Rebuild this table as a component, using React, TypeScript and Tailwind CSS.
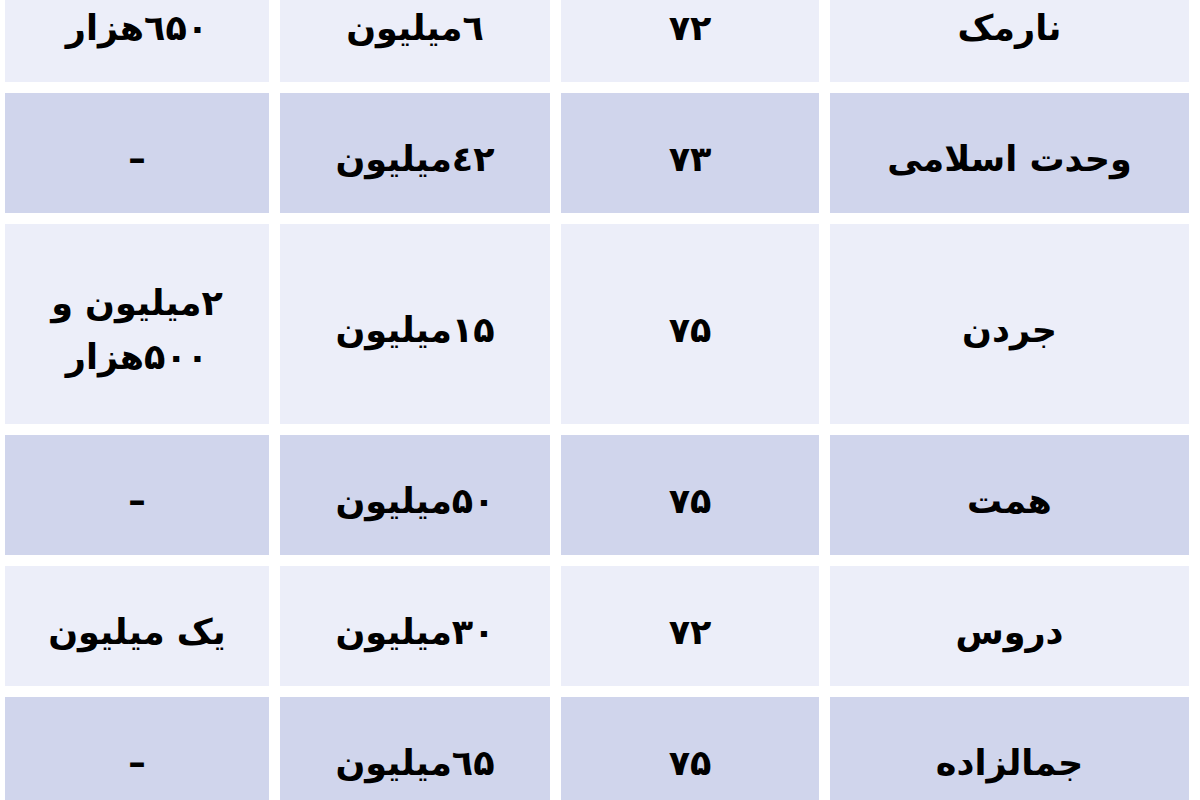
const rows: { name: string; age: string; price: string; extra: string[]; tall?: boolean; dark: boolean }[] = [
  { name: "نارمک", age: "۷۲", price: "٦میلیون", extra: ["٦۵۰هزار"], dark: false },
  { name: "وحدت اسلامی", age: "۷۳", price: "٤۲میلیون", extra: ["–"], dark: true },
  { name: "جردن", age: "۷۵", price: "۱۵میلیون", extra: ["۲میلیون و", "۵۰۰هزار"], tall: true, dark: false },
  { name: "همت", age: "۷۵", price: "۵۰میلیون", extra: ["–"], dark: true },
  { name: "دروس", age: "۷۲", price: "۳۰میلیون", extra: ["یک میلیون"], dark: false },
  { name: "جمالزاده", age: "۷۵", price: "٦۵میلیون", extra: ["–"], dark: true },
];

function Cell({ dark, tall, children }: { dark: boolean; tall?: boolean; children: React.ReactNode }) {
  return (
    <div
      className={
        "flex flex-col items-center justify-center pt-[12px] leading-[1.55] " +
        (tall ? "h-[200px] " : "h-[120px] ") +
        (dark ? "bg-[#d0d5ec]" : "bg-[#eceef9]")
      }
    >
      {children}
    </div>
  );
}

export default function App() {
  return (
    <div className="h-[800px] w-[1200px] overflow-hidden bg-white">
      <div
        dir="rtl"
        className="mt-[-38px] grid grid-cols-[359px_258px_270px_264px] gap-x-[11px] gap-y-[11px] pr-[11px] text-[35px] font-bold text-black [font-family:'DejaVu_Sans',sans-serif]"
      >
        {rows.map((r, i) => (
          <div key={i} className="contents">
            <Cell dark={r.dark} tall={r.tall}>{r.name}</Cell>
            <Cell dark={r.dark} tall={r.tall}>{r.age}</Cell>
            <Cell dark={r.dark} tall={r.tall}>{r.price}</Cell>
            <Cell dark={r.dark} tall={r.tall}>
              {r.extra.map((t, j) => (
                <span key={j}>{t}</span>
              ))}
            </Cell>
          </div>
        ))}
      </div>
    </div>
  );
}
